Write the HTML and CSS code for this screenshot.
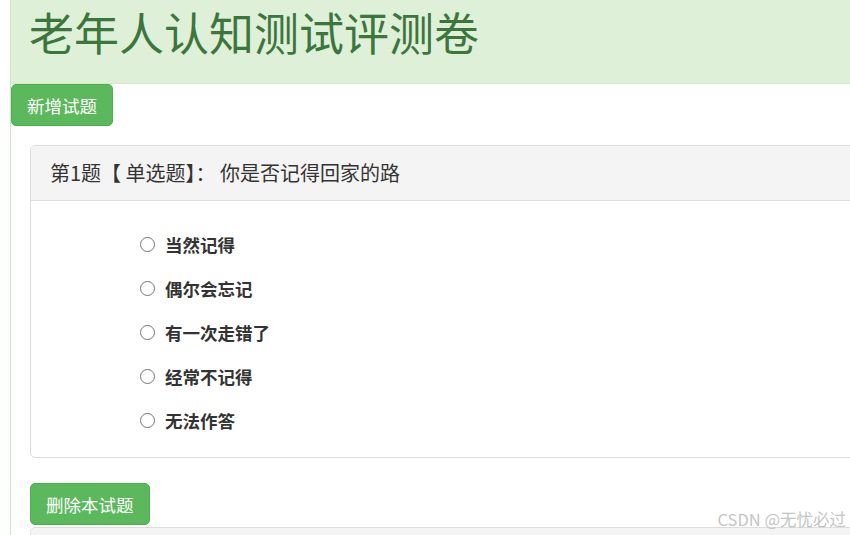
FILE: index.html
```html
<!DOCTYPE html>
<html lang="zh-CN">
<head>
<meta charset="utf-8">
<title>老年人认知测试评测卷</title>
<link rel="stylesheet" href="styles.css">
</head>
<body>
<div class="page">
  <header class="banner">
    <h1 class="title">老年人认知测试评测卷</h1>
  </header>
  <button class="btn btn-success">新增试题</button>
  <section class="question">
    <div class="panel">
      <div class="panel-heading">第1题【 单选题】： 你是否记得回家的路</div>
      <ul class="options">
        <li class="option"><input class="radio" type="radio" name="q1"><span class="label">当然记得</span></li>
        <li class="option"><input class="radio" type="radio" name="q1"><span class="label">偶尔会忘记</span></li>
        <li class="option"><input class="radio" type="radio" name="q1"><span class="label">有一次走错了</span></li>
        <li class="option"><input class="radio" type="radio" name="q1"><span class="label">经常不记得</span></li>
        <li class="option"><input class="radio" type="radio" name="q1"><span class="label">无法作答</span></li>
      </ul>
    </div>
    <button class="btn btn-success btn-delete">删除本试题</button>
    <div class="panel panel-next">
      <div class="panel-heading"></div>
    </div>
  </section>
</div>
<div class="watermark">CSDN @无忧必过</div>
</body>
</html>
```

FILE: styles.css
```css
html, body {
  margin: 0;
  padding: 0;
  overflow: hidden;
  background: #fff;
}
body {
  font-family: "Noto Sans CJK SC", "Liberation Sans", sans-serif;
  color: #333;
  padding-left: 10px;
  height: 535px;
  position: relative;
}
.page {
  border-left: 1px solid #d6e9c6;
  width: 1000px;
  height: 535px;
  display: flex;
  flex-direction: column;
  align-items: flex-start;
}
.page > *, .question > * {
  flex-shrink: 0;
}
.banner {
  align-self: stretch;
  background: #dff0d8;
  border-bottom: 1px solid #d6e9c6;
  height: 83px;
  box-sizing: content-box;
  padding-left: 18px;
}
.title {
  margin: 7px 0 0;
  font-size: 45px;
  line-height: 50px;
  font-weight: normal;
  color: #3c763d;
}
.btn {
  font-family: inherit;
  font-size: 17.5px;
  line-height: 25px;
  padding: 7.5px 15px;
  border-radius: 5px;
  border: 1px solid #4cae4c;
  background: #5cb85c;
  color: #fff;
  cursor: pointer;
  margin: 0;
}
.question {
  align-self: stretch;
  padding-left: 19px;
  display: flex;
  flex-direction: column;
  align-items: flex-start;
}
.panel {
  align-self: stretch;
  margin-top: 19px;
  border: 1px solid #ddd;
  border-radius: 5px;
  background: #fff;
}
.panel-heading {
  background: #f4f4f4;
  border-bottom: 1px solid #ddd;
  border-radius: 5px 5px 0 0;
  padding: 15px 19px;
  font-size: 20px;
  line-height: 24px;
  color: #333;
}
.options {
  list-style: none;
  margin: 0;
  padding: 21px 0 15px 109px;
}
.option {
  display: flex;
  align-items: center;
  height: 44px;
}
.radio {
  appearance: none;
  -webkit-appearance: none;
  width: 15px;
  height: 15px;
  margin: 0 10px 0 0;
  border: 1px solid #767676;
  border-radius: 50%;
  background: #fff;
  box-sizing: border-box;
}
.label {
  font-size: 17.5px;
  font-weight: bold;
  color: #333;
}
.btn-delete {
  margin-top: 25px;
}
.panel-next {
  margin-top: 2px;
}
.watermark {
  position: absolute;
  right: 4px;
  bottom: 4px;
  font-size: 16.5px;
  color: #c4c4c4;
  font-family: "Noto Sans CJK SC", "Liberation Sans", sans-serif;
}
```
